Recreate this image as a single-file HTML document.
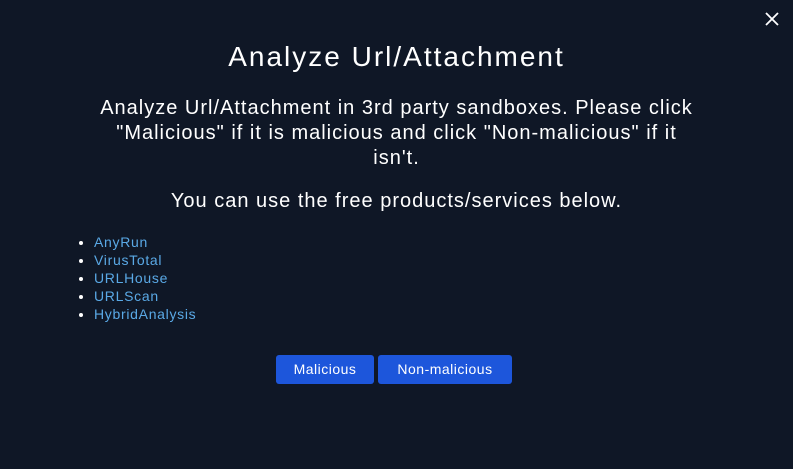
<!DOCTYPE html>
<html><head><style>
body{margin:0;width:793px;height:469px;background:#0f1726;font-family:"Liberation Sans",sans-serif;color:#fff;position:relative;overflow:hidden}
.t{position:absolute;top:41px;left:0;width:793px;text-align:center;font-size:28px;letter-spacing:2px}
.p{position:absolute;top:96px;left:0;width:793px;text-align:center;font-size:20px;line-height:25px;letter-spacing:1px}
.p2{position:absolute;top:189px;left:0;width:793px;text-align:center;font-size:20px;line-height:25px;letter-spacing:1px}
ul{position:absolute;top:233px;left:54px;margin:0;padding-left:40px;font-size:14px;line-height:18px;color:#5aa9e6;letter-spacing:0.7px}
li::marker{color:#fff}
.b{position:absolute;top:355px;height:29px;background:#1d56db;border-radius:3px;color:#fff;font-size:14px;line-height:29px;text-align:center;letter-spacing:0.5px}
</style></head><body>
<svg style="position:absolute;left:765px;top:12px" width="14" height="14" viewBox="0 0 14 14"><path d="M1 1L13 13M13 1L1 13" stroke="#fff" stroke-width="1.8"/></svg>
<div class="t">Analyze Url/Attachment</div>
<div class="p">Analyze Url/Attachment in 3rd party sandboxes. Please click<br>"Malicious" if it is malicious and click "Non-malicious" if it<br>isn't.</div>
<div class="p2">You can use the free products/services below.</div>
<ul><li>AnyRun</li><li>VirusTotal</li><li>URLHouse</li><li>URLScan</li><li>HybridAnalysis</li></ul>
<div class="b" style="left:276px;width:98px">Malicious</div>
<div class="b" style="left:378px;width:134px">Non-malicious</div>
</body></html>
